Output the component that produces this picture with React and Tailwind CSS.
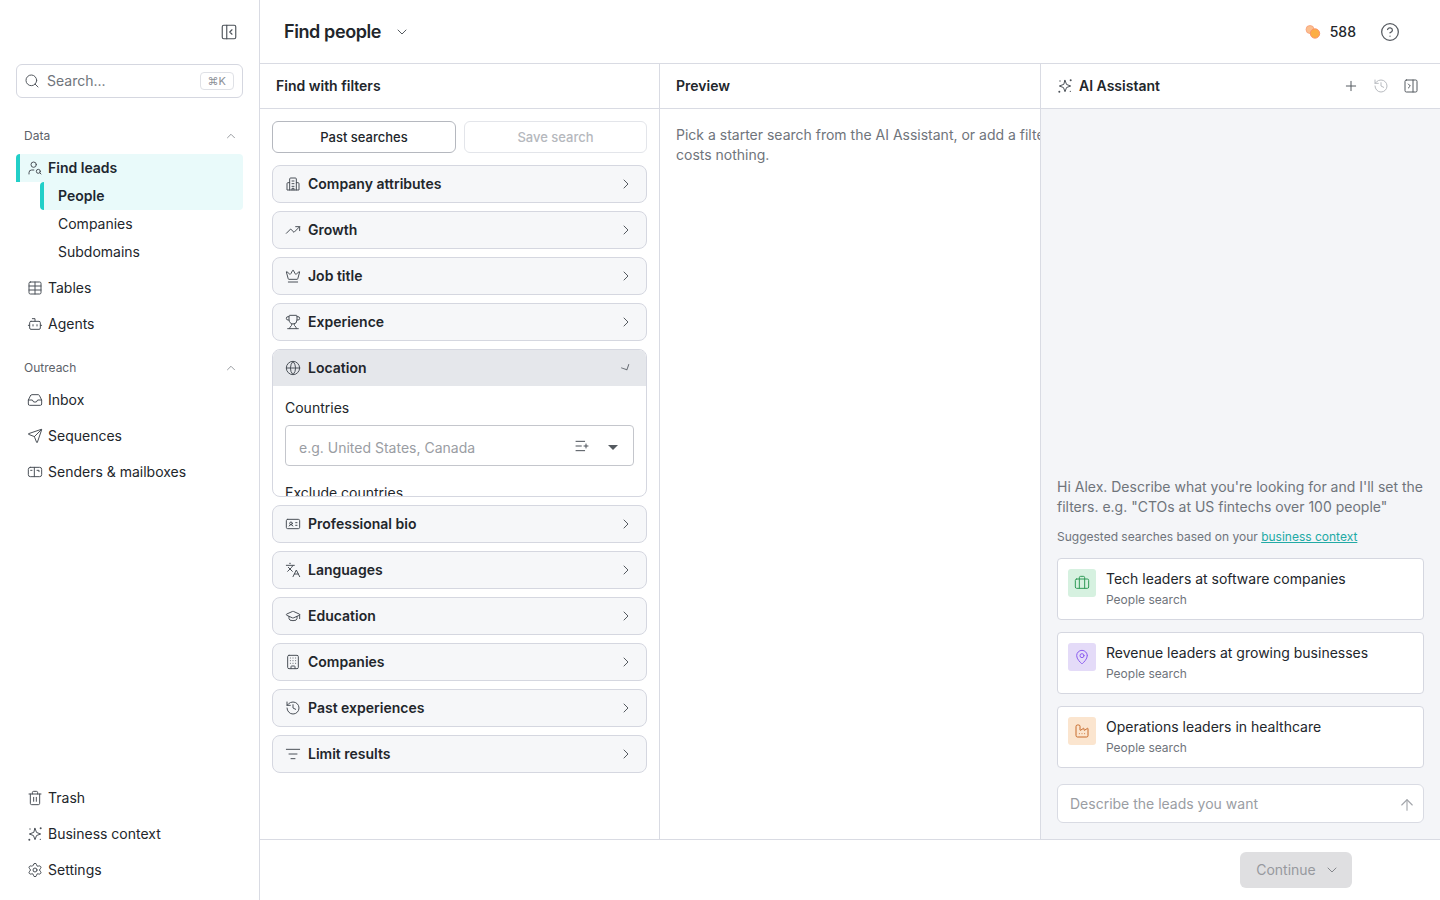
import React from 'react';
import {
  PanelLeftClose, PanelRightClose, Search, ChevronUp, ChevronDown, ChevronRight, UserSearch, Table, Bot, Inbox, Send,
  Trash2, Settings, TrendingUp, Crown, Trophy, Globe, IdCard, Languages, GraduationCap, Building,
  History, ListFilter, Briefcase, MapPin, Factory, ArrowUp, Plus, CircleHelp, ListPlus,
} from 'lucide-react';

function Mailboxes({ size = 16, strokeWidth = 1.5, className }) {
  return (
    <svg width={size} height={size} viewBox="0 0 24 24" fill="none" stroke="currentColor" strokeWidth={strokeWidth} strokeLinecap="round" strokeLinejoin="round" className={className}>
      <rect x="2" y="5" width="20" height="14" rx="3" />
      <path d="M11 5v14" />
      <path d="M5.5 9.5h2" />
      <path d="M15 9.5h3v2" />
    </svg>
  );
}

function SparkleDots({ size = 16, strokeWidth = 1.5, className }) {
  return (
    <svg width={size} height={size} viewBox="0 0 24 24" fill="none" stroke="currentColor" strokeWidth={strokeWidth} strokeLinecap="round" strokeLinejoin="round" className={className}>
      <path d="M12 3.5l2.3 6.2 6.2 2.3-6.2 2.3L12 20.5l-2.3-6.2L3.500 12l6.2-2.300z" />
      <circle cx="20.500" cy="3.500" r="1.500" fill="currentColor" stroke="none" />
      <circle cx="3.500" cy="20.500" r="1.500" fill="currentColor" stroke="none" />
      <circle cx="4.500" cy="4.500" r="1" fill="currentColor" stroke="none" />
      <circle cx="20" cy="20" r="1" fill="currentColor" stroke="none" />
    </svg>
  );
}

function CompanyAttrs({ size = 16, strokeWidth = 1.5, className }) {
  return (
    <svg width={size} height={size} viewBox="0 0 24 24" fill="none" stroke="currentColor" strokeWidth={strokeWidth} strokeLinecap="round" strokeLinejoin="round" className={className}>
      <path d="M7 21V4.5A1.5 1.5 0 0 1 8.5 3h7A1.5 1.5 0 0 1 17 4.5V21" />
      <path d="M7 10H4.5A1.5 1.5 0 0 0 3 11.5V21h18v-9.5a1.5 1.5 0 0 0-1.5-1.5H17" />
      <path d="M10.5 7.5h3M10.5 11.5h3M10.5 15.5h3M10.5 21v-2.5h3V21" />
    </svg>
  );
}

function NavItem({ icon: Icon, label }) {
  return (
    <div className="h-9 flex items-center pl-[11px] text-[14px] text-[#22262b]">
      <Icon size={16} strokeWidth={1.5} className="text-[#4b5158] mr-[5px] shrink-0" />
      <span>{label}</span>
    </div>
  );
}

function SectionLabel({ label, className }) {
  return (
    <div className={`flex items-center justify-between h-4 pl-2 pr-[5px] text-[12px] text-[#5d6269] ${className}`}>
      <span>{label}</span>
      <ChevronUp size={14} strokeWidth={1.5} className="text-[#8a8e94]" />
    </div>
  );
}

function Sidebar() {
  return (
    <aside className="w-[260px] h-full shrink-0 border-r border-[#d9dbe3] flex flex-col px-4 bg-white">
      <div className="h-16 flex items-center justify-end pr-[5px] shrink-0">
        <PanelLeftClose size={18} strokeWidth={1.5} className="text-[#4b5158]" />
      </div>
      <div className="h-[34px] border border-[#d5d7e0] rounded-md flex items-center pl-[7px] pr-2 text-[14px] text-[#6f747b] shrink-0">
        <Search size={16} strokeWidth={1.5} className="text-[#555a60]" />
        <span className="ml-[7px]">Search...</span>
        <span className="ml-auto h-[18px] px-[7px] border border-[#dfe1e6] rounded text-[11px] leading-[16px] text-[#8d9197]">⌘K</span>
      </div>
      <SectionLabel label="Data" className="mt-[30px] mb-[10px]" />
      <div className="h-7 flex items-center bg-[#e9fafa] rounded-t-[4px] border-l-4 border-[#22cfc8] pl-[7px] text-[14px] font-semibold text-[#1d2730]">
        <UserSearch size={16} strokeWidth={1.5} className="text-[#4b5158] mr-[5px]" />
        Find leads
      </div>
      <div className="pl-6">
        <div className="h-7 flex items-center bg-[#e9fafa] rounded-b-[4px] rounded-tl-[4px] border-l-4 border-[#22cfc8] pl-[14px] text-[14px] font-semibold text-[#1d2730]">
          People
        </div>
        <div className="h-7 flex items-center pl-[18px] text-[14px] text-[#22262b]">Companies</div>
        <div className="h-7 flex items-center pl-[18px] text-[14px] text-[#22262b]">Subdomains</div>
      </div>
      <div className="mt-1">
        <NavItem icon={Table} label="Tables" />
        <NavItem icon={Bot} label="Agents" />
      </div>
      <SectionLabel label="Outreach" className="mt-[18px] mb-[6px]" />
      <NavItem icon={Inbox} label="Inbox" />
      <NavItem icon={Send} label="Sequences" />
      <NavItem icon={Mailboxes} label="Senders & mailboxes" />
      <div className="mt-auto pb-3">
        <NavItem icon={Trash2} label="Trash" />
        <NavItem icon={SparkleDots} label="Business context" />
        <NavItem icon={Settings} label="Settings" />
      </div>
    </aside>
  );
}

function FilterRow({ icon: Icon, label }) {
  return (
    <div className="h-[38px] shrink-0 border border-[#d5d7e0] rounded-lg bg-[#f6f7f9] flex items-center pl-3 pr-3 text-[14px] font-semibold text-[#22262b]">
      <Icon size={16} strokeWidth={1.5} className="text-[#4b5158] mr-[7px] shrink-0" />
      {label}
      <ChevronRight size={16} strokeWidth={1.5} className="ml-auto text-[#555a60]" />
    </div>
  );
}

function LocationPanel() {
  return (
    <div className="h-[148px] shrink-0 border border-[#d5d7e0] rounded-lg overflow-hidden bg-white">
      <div className="h-[36px] bg-[#e5e7eb] flex items-center pl-3 pr-3 text-[14px] font-semibold text-[#22262b]">
        <Globe size={16} strokeWidth={1.5} className="text-[#4b5158] mr-[7px]" />
        Location
        <ChevronRight size={16} strokeWidth={1.5} className="ml-auto text-[#6b7076] rotate-[65deg]" />
      </div>
      <div className="px-3 pt-[13px] text-[14px] text-[#22262b]">
        <div className="leading-[18px]">Countries</div>
        <div className="mt-[8px] h-[41px] border border-[#c4c6cc] rounded flex items-center pl-[13px] pr-[15px] text-[#9a9da3]">
          <span className="mt-[5px]">e.g. United States, Canada</span>
          <ListPlus size={16} strokeWidth={1.5} className="ml-auto mt-[1px] text-[#4b5158]" />
          <span className="ml-[18px] w-0 h-0 border-x-[5px] border-x-transparent border-t-[5px] border-t-[#555a60] mt-[3px]" />
        </div>
        <div className="mt-[18px] leading-[18px]">Exclude countries</div>
      </div>
    </div>
  );
}

function FiltersColumn() {
  return (
    <section className="w-[400px] shrink-0 border-r border-[#d9dbe3] flex flex-col bg-white">
      <div className="h-[45px] shrink-0 border-b border-[#d9dbe3] flex items-center px-4 text-[14px] font-semibold text-[#22262b]">Find with filters</div>
      <div className="flex flex-col gap-2 px-3 pt-3">
        <div className="flex gap-2 mb-[4px]">
          <div className="w-[184px] h-8 border border-[#b5b8bf] rounded-md flex items-center justify-center text-[13px] font-medium text-[#22262b]">Past searches</div>
          <div className="flex-1 h-8 border border-[#e3e5ea] rounded-md flex items-center justify-center text-[13px] font-medium text-[#b5b8bd]">Save search</div>
        </div>
        <FilterRow icon={CompanyAttrs} label="Company attributes" />
        <FilterRow icon={TrendingUp} label="Growth" />
        <FilterRow icon={Crown} label="Job title" />
        <FilterRow icon={Trophy} label="Experience" />
        <LocationPanel />
        <FilterRow icon={IdCard} label="Professional bio" />
        <FilterRow icon={Languages} label="Languages" />
        <FilterRow icon={GraduationCap} label="Education" />
        <FilterRow icon={Building} label="Companies" />
        <FilterRow icon={History} label="Past experiences" />
        <FilterRow icon={ListFilter} label="Limit results" />
      </div>
    </section>
  );
}

function PreviewColumn() {
  return (
    <section className="w-[381px] shrink-0 border-r border-[#d9dbe3] flex flex-col bg-white overflow-hidden">
      <div className="h-[45px] shrink-0 border-b border-[#d9dbe3] flex items-center px-4 text-[14px] font-semibold text-[#22262b]">Preview</div>
      <p className="pl-4 pt-4 text-[14px] leading-[20px] text-[#6f747b] whitespace-nowrap">
        Pick a starter search from the AI Assistant, or add a filter. Preview<br />costs nothing.
      </p>
    </section>
  );
}

function Suggestion({ icon: Icon, title, tile, tint }) {
  return (
    <div className="h-[62px] bg-white border border-[#d5d7e0] rounded flex items-start pl-[10px] pt-[10px]">
      <div className={`w-7 h-7 rounded-[3px] flex items-center justify-center ${tile}`}>
        <Icon size={16} strokeWidth={1.5} className={tint} />
      </div>
      <div className="ml-[10px]">
        <div className="text-[14px] leading-5 text-[#22262b]">{title}</div>
        <div className="text-[12px] leading-4 mt-[3px] text-[#6f747b]">People search</div>
      </div>
    </div>
  );
}

function AssistantColumn() {
  return (
    <section className="flex-1 flex flex-col min-w-0 bg-[#f4f5f8]">
      <div className="h-[45px] shrink-0 border-b border-[#d9dbe3] bg-white flex items-center pl-4 pr-[21px] text-[14px] font-semibold text-[#22262b]">
        <SparkleDots size={16} strokeWidth={1.5} className="text-[#4b5158] mr-[6px]" />
        AI Assistant
        <Plus size={16} strokeWidth={1.5} className="ml-auto text-[#555a60]" />
        <History size={16} strokeWidth={1.5} className="ml-[14px] text-[#b8bbc0]" />
        <PanelRightClose size={16} strokeWidth={1.5} className="ml-[14px] text-[#555a60]" />
      </div>
      <div className="flex-1 flex flex-col justify-end px-4 pb-4">
        <p className="text-[14px] leading-5 text-[#6f747b]">Hi Alex. Describe what you're looking for and I'll set the filters. e.g. "CTOs at US fintechs over 100 people"</p>
        <p className="text-[12px] leading-4 mt-[12px] text-[#6f747b]">
          Suggested searches based on your <a className="text-[#22aaa5] underline">business context</a>
        </p>
        <div className="flex flex-col gap-3 mt-[13px]">
          <Suggestion icon={Briefcase} title="Tech leaders at software companies" tile="bg-[#d6f1e0]" tint="text-[#2f9a57]" />
          <Suggestion icon={MapPin} title="Revenue leaders at growing businesses" tile="bg-[#e4dbf8]" tint="text-[#8b5cf0]" />
          <Suggestion icon={Factory} title="Operations leaders in healthcare" tile="bg-[#fbe5cf]" tint="text-[#c76a2a]" />
        </div>
        <div className="mt-4 h-[39px] bg-white border border-[#d9dbe3] rounded-md flex items-center pl-3 pr-[7px] text-[14px] text-[#9a9da3]">
          Describe the leads you want
          <ArrowUp size={18} strokeWidth={1.5} className="ml-auto mt-[3px] text-[#a3a6ab]" />
        </div>
      </div>
    </section>
  );
}

function Coins() {
  return (
    <svg width="16" height="16" viewBox="0 0 16 16" className="shrink-0">
      <circle cx="5" cy="5.5" r="4" fill="#fbbf8e" stroke="#f8a07a" strokeWidth="0.8" />
      <circle cx="10" cy="9.5" r="4.7" fill="#fcae45" stroke="#fb8f6a" strokeWidth="0.9" />
    </svg>
  );
}

export default function App() {
  return (
    <div className="w-[1440px] h-[900px] flex overflow-hidden bg-white leading-5" style={{ fontFamily: 'Inter, "Noto Sans", sans-serif' }}>
      <Sidebar />
      <main className="flex-1 min-w-0 flex flex-col">
        <header className="h-16 shrink-0 border-b border-[#d9dbe3] flex items-center pl-6 pr-10">
          <span className="text-[18px] font-semibold text-[#22262b] tracking-[-0.4px]">Find people</span>
          <ChevronDown size={16} strokeWidth={1.5} className="ml-[13px] text-[#555a60]" />
          <div className="ml-auto flex items-center">
            <Coins />
            <span className="ml-[9px] text-[14px] font-medium text-[#22262b]">588</span>
            <CircleHelp size={20} strokeWidth={1.5} className="ml-6 text-[#555a60]" />
          </div>
        </header>
        <div className="flex-1 min-h-0 flex border-b border-[#d9dbe3]">
          <FiltersColumn />
          <PreviewColumn />
          <AssistantColumn />
        </div>
        <footer className="h-[60px] shrink-0 flex items-center justify-end pr-[88px]">
          <div className="w-28 h-9 rounded-md bg-[#dfdfe1] flex items-center justify-center pl-1 text-[14px] text-[#97999e]">
            Continue
            <ChevronDown size={16} strokeWidth={1.5} className="ml-2 text-[#85878c]" />
          </div>
        </footer>
      </main>
    </div>
  );
}
